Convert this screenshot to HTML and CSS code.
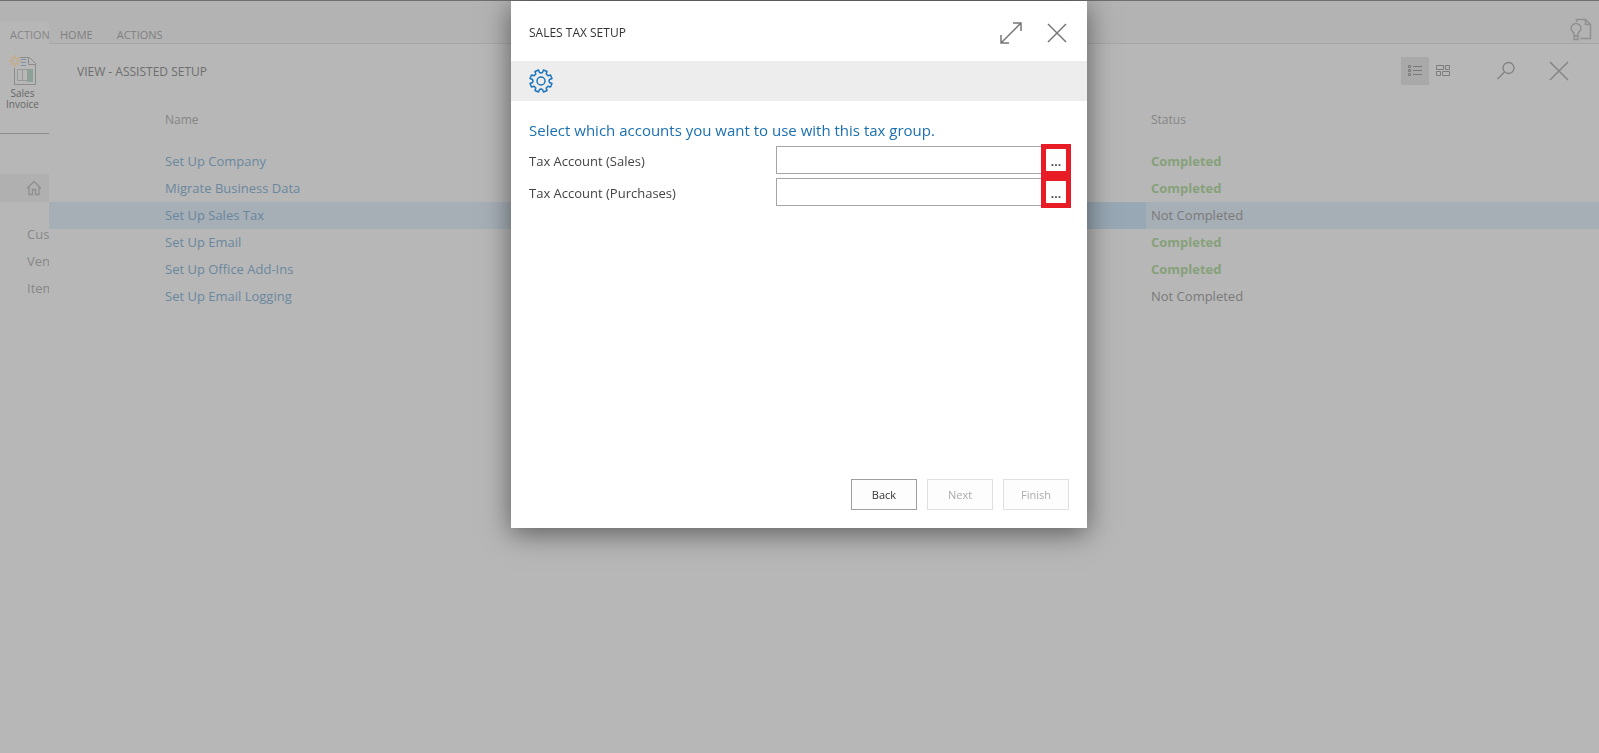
FILE: index.html
```html
<!DOCTYPE html>
<html lang="en">
<head>
    <meta charset="UTF-8">
    <meta name="viewport" content="width=device-width, initial-scale=1.0">
    <title>Sales Tax Setup</title>
    <link rel="stylesheet" href="styles.css">
</head>
<body>

    <div class="app">
        <!-- Role center, mostly covered by the list page -->
        <aside class="sidebar">
            <div class="sidebar-tab">ACTIONS</div>
            <a class="sidebar-action" href="#">
                <svg width="28" height="32" viewBox="0 0 28 32" fill="none">
                    <path d="M11 3.500H20.500L26.500 9.500V30.500H5.500V14" stroke="#8b8b8b"/>
                    <path d="M19.500 4V10.500H26" stroke="#8b8b8b"/>
                    <path d="M12 5.500H17M12 8.500H17M12 11.500H17" stroke="#7d93a5"/>
                    <path d="M8.500 15.500H24M8.500 15.500V26.500H24M13.500 15.500V26.500" stroke="#989898"/>
                    <rect x="18" y="15" width="6" height="13" fill="#8da198"/>
                    <path d="M6 1V5M6 9V13M0 7H4M8 7H12M2 3L4.500 5.500M7.500 8.500L10 11M10 3L7.500 5.500M4.500 8.500L2 11" stroke="#c2ad90" stroke-width="2"/>
                    <circle cx="6" cy="7" r="3" stroke="#c2ad90"/>
                </svg>
                <span>Sales<br>Invoice</span>
            </a>
            <a class="sidebar-home" href="#" aria-label="Home">
                <svg width="16" height="16" viewBox="0 0 16 16" fill="none" stroke="#8f8f8f" stroke-width="1.300">
                    <path d="M1 8.500L8 1.500L15 8.500M3 7V14.500H6.500V9.500H9.500V14.500H13V7"/>
                </svg>
            </a>
            <nav class="sidebar-nav">
                <a href="#">Customers</a>
                <a href="#">Vendors</a>
                <a href="#">Items</a>
            </nav>
        </aside>

        <!-- Assisted setup list -->
        <main class="page">
            <header class="ribbon">
                <nav class="ribbon-tabs">
                    <a href="#">HOME</a>
                    <a href="#">ACTIONS</a>
                </nav>
                <button class="icon-btn" type="button" aria-label="Tips">
                    <svg width="22" height="24" viewBox="0 0 22 24" fill="none" stroke="#8f8f8f" stroke-width="1.400">
                        <path d="M6.500 4V1.500H15.500L20.500 6.500V20.500H10.500"/>
                        <path d="M15.500 1.500V6.500H20.500"/>
                        <path d="M4 18V16C4 14 1 13 1 10.500A5 5 0 0 1 11 10.500C11 13 8 14 8 16V18ZM4 18V21.500H8V18"/>
                    </svg>
                </button>
            </header>

            <div class="page-header">
                <h1>VIEW - ASSISTED SETUP</h1>
                <div class="page-tools">
                    <button class="tool-btn active" type="button" aria-label="List">
                        <svg width="14" height="12" viewBox="0 0 14 12" fill="none" stroke="#787878">
                            <path d="M.5 .5h2v2h-2zM.5 4.500h2v2h-2zM.5 8.500h2v2h-2zM5 1.500H14M5 5.500H14M5 9.500H14"/>
                        </svg>
                    </button>
                    <button class="tool-btn" type="button" aria-label="Tiles">
                        <svg width="14" height="12" viewBox="0 0 14 12" fill="none" stroke="#7c7c7c">
                            <path d="M.5 .5h7v4h-7zM9.500 .5h4v4h-4zM.5 6.500h4v4h-4zM6.500 6.500h7v4h-7z"/>
                        </svg>
                    </button>
                    <button class="tool-btn search" type="button" aria-label="Search">
                        <svg width="20" height="20" viewBox="0 0 20 20" fill="none" stroke="#808080" stroke-width="1.300">
                            <circle cx="12.500" cy="7" r="5.500"/>
                            <path d="M8.500 11L1.500 18"/>
                        </svg>
                    </button>
                    <button class="tool-btn close" type="button" aria-label="Close page">
                        <svg width="20" height="20" viewBox="0 0 20 20" fill="none" stroke="#858585" stroke-width="1.500">
                            <path d="M1 1L19 19M19 1L1 19"/>
                        </svg>
                    </button>
                </div>
            </div>

            <table class="setup-list">
                <thead>
                    <tr><th class="col-name">Name</th><th></th><th class="col-status">Status</th></tr>
                </thead>
                <tbody>
                    <tr><td><a href="#">Set Up Company</a></td><td></td><td class="done">Completed</td></tr>
                    <tr><td><a href="#">Migrate Business Data</a></td><td></td><td class="done">Completed</td></tr>
                    <tr class="selected"><td><a href="#">Set Up Sales Tax</a></td><td class="focused"></td><td>Not Completed</td></tr>
                    <tr><td><a href="#">Set Up Email</a></td><td></td><td class="done">Completed</td></tr>
                    <tr><td><a href="#">Set Up Office Add-Ins</a></td><td></td><td class="done">Completed</td></tr>
                    <tr><td><a href="#">Set Up Email Logging</a></td><td></td><td>Not Completed</td></tr>
                </tbody>
            </table>
        </main>
    </div>

    <!-- Sales tax wizard -->
    <div class="modal">
        <form class="modal-content" role="dialog" aria-labelledby="modal-title">
            <div class="modal-header">
                <h2 id="modal-title">SALES TAX SETUP</h2>
                <button class="icon-btn" type="button" aria-label="Expand">
                    <svg width="22" height="22" viewBox="0 0 22 22" fill="none" stroke="#777" stroke-width="1.500">
                        <path d="M1.500 20.500L20.500 1.500M13 1H21V9M1 13V21H9"/>
                    </svg>
                </button>
                <button class="icon-btn" type="button" aria-label="Close">
                    <svg width="20" height="20" viewBox="0 0 20 20" fill="none" stroke="#777" stroke-width="1.500">
                        <path d="M1 1L19 19M19 1L1 19"/>
                    </svg>
                </button>
            </div>
            <div class="modal-band">
                <svg width="24" height="24" viewBox="0 0 24 24" fill="none" stroke="#1b75bc" stroke-width="1.500" stroke-linejoin="round">
                    <circle cx="12" cy="12" r="4"/>
                    <path d="M10.500 3.500L12 4L13.500 3.500L14.500 1L18 2.500L17.200 5L19 6.800L21.500 6L23 9.500L20.500 10.500L20 12L20.500 13.500L23 14.500L21.500 18L19 17.200L17.200 19L18 21.500L14.500 23L13.500 20.500L12 20L10.500 20.500L9.500 23L6 21.500L6.800 19L5 17.200L2.500 18L1 14.500L3.500 13.500L4 12L3.500 10.500L1 9.500L2.500 6L5 6.800L6.800 5L6 2.500L9.500 1Z"/>
                </svg>
            </div>
            <div class="modal-body">
                <h3>Select which accounts you want to use with this tax group.</h3>
                <div class="form-group">
                    <label for="tax-sales">Tax Account (Sales)</label>
                    <input type="text" id="tax-sales" name="tax-sales">
                    <button class="lookup" type="button">...</button>
                </div>
                <div class="form-group">
                    <label for="tax-purchases">Tax Account (Purchases)</label>
                    <input type="text" id="tax-purchases" name="tax-purchases">
                    <button class="lookup" type="button">...</button>
                </div>
            </div>
            <div class="modal-footer">
                <button class="btn" type="button">Back</button>
                <button class="btn" type="button" disabled>Next</button>
                <button class="btn" type="button" disabled>Finish</button>
            </div>
        </form>
    </div>

</body>
</html>
```
FILE: styles.css
```css
/* General Styles */
* {
    box-sizing: border-box;
}

body {
    margin: 0;
    font-family: "Open Sans", "Noto Sans", sans-serif;
    font-size: 13px;
    color: #7a7a7a;
    background-color: #b7b7b7;
}

h1, h2, h3 {
    margin: 0;
    font-weight: normal;
}

a {
    color: inherit;
    text-decoration: none;
}

button {
    font-family: inherit;
    cursor: pointer;
}

svg {
    display: block;
}

.app {
    display: flex;
    min-height: 100vh;
    border-top: 1px solid #6f6f71;
}

/* Sidebar */
.sidebar {
    flex: none;
    width: 49px;
    overflow: hidden;
    border-top: 21px solid #b3b3b3;
    white-space: nowrap;
}

.sidebar-tab {
    padding-left: 10px;
    font-size: 11px;
    line-height: 26px;
    color: #858585;
}

.sidebar-action {
    display: flex;
    flex-direction: column;
    align-items: center;
    height: 86px;
    padding: 6px 4px 0 0;
    border-bottom: 1px solid #8c8c8c;
    font-size: 10px;
    line-height: 11px;
    text-align: center;
    color: #666;
}

.sidebar-action svg {
    margin-bottom: 2px;
}

.sidebar-home {
    display: flex;
    align-items: center;
    height: 28px;
    margin-top: 40px;
    padding-left: 26px;
    background-color: #b0b0b0;
}

.sidebar-nav {
    padding: 19px 0 0 27px;
    line-height: 27px;
    color: #888;
}

.sidebar-nav a {
    display: block;
}

/* List page */
.page {
    flex: 1;
}

.ribbon {
    display: flex;
    justify-content: space-between;
    align-items: flex-end;
    height: 43px;
    padding: 0 7px 0 11px;
    border-bottom: 1px solid #a6a6a6;
    background-color: #b3b3b3;
}

.ribbon-tabs {
    display: flex;
    gap: 24px;
    font-size: 11px;
    line-height: 16px;
    color: #808080;
}

.ribbon .icon-btn {
    padding-bottom: 1px;
}

.icon-btn {
    padding: 0;
    border: none;
    background: none;
}

.page-header {
    display: flex;
    justify-content: space-between;
    align-items: center;
    height: 54px;
    padding: 0 30px 0 28px;
}

.page-header h1 {
    font-size: 12px;
    color: #6e6e6e;
}

.page-tools {
    display: flex;
}

.tool-btn {
    display: flex;
    justify-content: center;
    align-items: center;
    width: 28px;
    height: 28px;
    padding: 0;
    border: none;
    background: none;
}

.tool-btn.active {
    background-color: #a9a9a9;
}

.tool-btn.search {
    margin-left: 35px;
}

.tool-btn.close {
    width: 20px;
    margin-left: 29px;
}

.setup-list {
    width: 100%;
    table-layout: fixed;
    border-collapse: collapse;
}

.setup-list th {
    height: 50px;
    padding: 0 5px 8px;
    font-size: 12px;
    font-weight: normal;
    text-align: left;
    color: #868686;
}

.setup-list td {
    height: 27px;
    padding: 0 5px 2px;
}

.setup-list th:first-child,
.setup-list td:first-child {
    padding-left: 116px;
}

.col-name {
    width: 38%;
}

.col-status {
    width: 453px;
}

.setup-list a {
    color: #6a879e;
}

.setup-list .done {
    font-weight: bold;
    color: #86a17a;
}

.selected {
    background-color: #a6aeb6;
}

.selected .focused {
    background-color: #98a8b4;
}

/* Modal Styles */
.modal {
    position: fixed;
    top: 1px;
    left: 0;
    width: 100%;
    height: 100%;
    display: flex;
    justify-content: center;
    align-items: flex-start;
    padding-right: 1px;
}

.modal-content {
    display: flex;
    flex-direction: column;
    width: 576px;
    min-height: 527px;
    background-color: #fff;
    box-shadow: 0 5px 26px rgba(0, 0, 0, 0.5);
    color: #444;
}

.modal-header {
    display: flex;
    align-items: center;
    gap: 25px;
    height: 60px;
    padding: 3px 20px 0 18px;
}

.modal-header h2 {
    flex: 1;
    font-size: 12px;
    color: #333;
}

.modal-band {
    display: flex;
    align-items: center;
    height: 40px;
    padding: 0 18px;
    background-color: #ededed;
}

.modal-body {
    flex: 1;
    padding: 17px 18px;
}

.modal-body h3 {
    margin-bottom: 4px;
    font-size: 15px;
    line-height: 24px;
    color: #1a70b0;
}

.form-group {
    display: flex;
    align-items: center;
    margin-bottom: 4px;
}

.form-group label {
    width: 247px;
    padding-top: 2px;
}

.form-group input {
    flex: 1;
    min-width: 0;
    height: 28px;
    padding: 0 6px;
    border: 1px solid #a6a6a6;
    font: inherit;
}

.lookup {
    width: 20px;
    height: 22px;
    margin: 0 3px 0 4px;
    padding: 2px 0 0;
    border: none;
    outline: 5px solid #e81c24;
    background-color: #fdfdfd;
    font-size: 12px;
    font-weight: bold;
    color: #555;
}

.modal-footer {
    display: flex;
    justify-content: flex-end;
    gap: 10px;
    padding: 18px;
}

.btn {
    width: 66px;
    height: 31px;
    padding: 0;
    border: 1px solid #a0a0a0;
    background-color: #fdfdfd;
    font-size: 11px;
    color: #333;
}

.btn:disabled {
    border-color: #e0e0e0;
    color: #aaa;
}
```
